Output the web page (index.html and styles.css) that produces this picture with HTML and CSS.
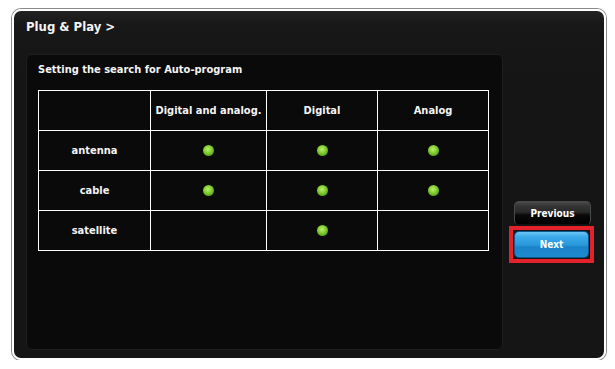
FILE: index.html
```html
<!DOCTYPE html>
<html>
<head>
<meta charset="utf-8">
<link rel="stylesheet" href="styles.css">
</head>
<body>
<div class="frame">
  <div class="header">Plug &amp; Play &gt;</div>
  <div class="main">
    <div class="panel">
      <div class="panel-title">Setting the search for Auto-program</div>
      <table class="grid">
        <tr>
          <td class="c1"></td>
          <td class="c2">Digital and analog.</td>
          <td class="c3">Digital</td>
          <td class="c4">Analog</td>
        </tr>
        <tr>
          <td>antenna</td>
          <td><span class="dot"></span></td>
          <td><span class="dot"></span></td>
          <td><span class="dot"></span></td>
        </tr>
        <tr>
          <td>cable</td>
          <td><span class="dot"></span></td>
          <td><span class="dot"></span></td>
          <td><span class="dot"></span></td>
        </tr>
        <tr>
          <td>satellite</td>
          <td></td>
          <td><span class="dot"></span></td>
          <td></td>
        </tr>
      </table>
    </div>
    <div class="side">
      <div class="btn prev">Previous</div>
      <div class="focus">
        <div class="btn next">Next</div>
      </div>
    </div>
  </div>
</div>
</body>
</html>
```
FILE: styles.css
```css
html, body {
  margin: 0;
  padding: 0;
  background: #ffffff;
}
body {
  font-family: "DejaVu Sans Condensed", "DejaVu Sans", sans-serif;
  font-weight: bold;
  color: #f4f4f4;
}
.frame {
  margin: 9px 0 0 12px;
  width: 594px;
  height: 351px;
  box-sizing: border-box;
  border: 2px solid #ffffff;
  box-shadow: 0 0 0 1px #8a8a8a;
  border-radius: 9px;
  background: linear-gradient(to bottom, #222222 0px, #181818 14px, #151515 60px, #151515 100%);
  display: flex;
  flex-direction: column;
  overflow: hidden;
}
.header {
  height: 43px;
  box-sizing: border-box;
  padding: 8px 0 0 12px;
  font-size: 13px;
  line-height: 16px;
}
.main {
  display: flex;
  flex: 1;
}
.panel {
  width: 477px;
  height: 296px;
  margin-left: 12px;
  box-sizing: border-box;
  background: #0a0a0a;
  border: 1px solid #1f1f1f;
  border-radius: 6px;
  padding: 8px 0 0 11px;
}
.panel-title {
  font-size: 11px;
  line-height: 14px;
  height: 27px;
}
.grid {
  border-collapse: collapse;
  font-size: 11px;
}
.grid td {
  border: 1px solid #ffffff;
  text-align: center;
  vertical-align: middle;
  height: 39px;
  padding: 0;
  line-height: 12px;
}
.grid .c1 { width: 111px; }
.grid .c2 { width: 115px; }
.grid .c3 { width: 110px; }
.grid .c4 { width: 110px; }
.dot {
  display: inline-block;
  width: 11px;
  height: 11px;
  border-radius: 50%;
  vertical-align: middle;
  background: radial-gradient(circle at 45% 40%, #b8f070 0px, #8fd53a 3px, #5fae1c 6px, #3f7f10 8px);
}
.side {
  display: flex;
  flex-direction: column;
  padding: 147px 0 0 11px;
}
.btn {
  box-sizing: border-box;
  width: 77px;
  height: 23px;
  border-radius: 5px;
  font-size: 10px;
  line-height: 22px;
  text-align: center;
  color: #ffffff;
}
.prev {
  height: 24px;
  padding-top: 3px;
  line-height: 18px;
  background: linear-gradient(to bottom, #4a4a4a 0px, #343434 4px, #2a2a2a 10px, #0a0a0a 13px, #000000 100%);
  border: 1px solid #4a4a4a;
  border-bottom-color: #111;
}
.focus {
  margin: 1px 0 0 -5px;
  width: 85px;
  height: 37px;
  box-sizing: border-box;
  border: 4px solid #e3222b;
  padding: 1px;
}
.next {
  width: 75px;
  height: 27px;
  line-height: 26px;
  background: linear-gradient(to bottom, #6cc6f4 0px, #3aa9ea 5px, #2a99dc 13px, #1a82c8 15px, #1e8ad0 100%);
  border: 1px solid #0e5a8e;
}
```
